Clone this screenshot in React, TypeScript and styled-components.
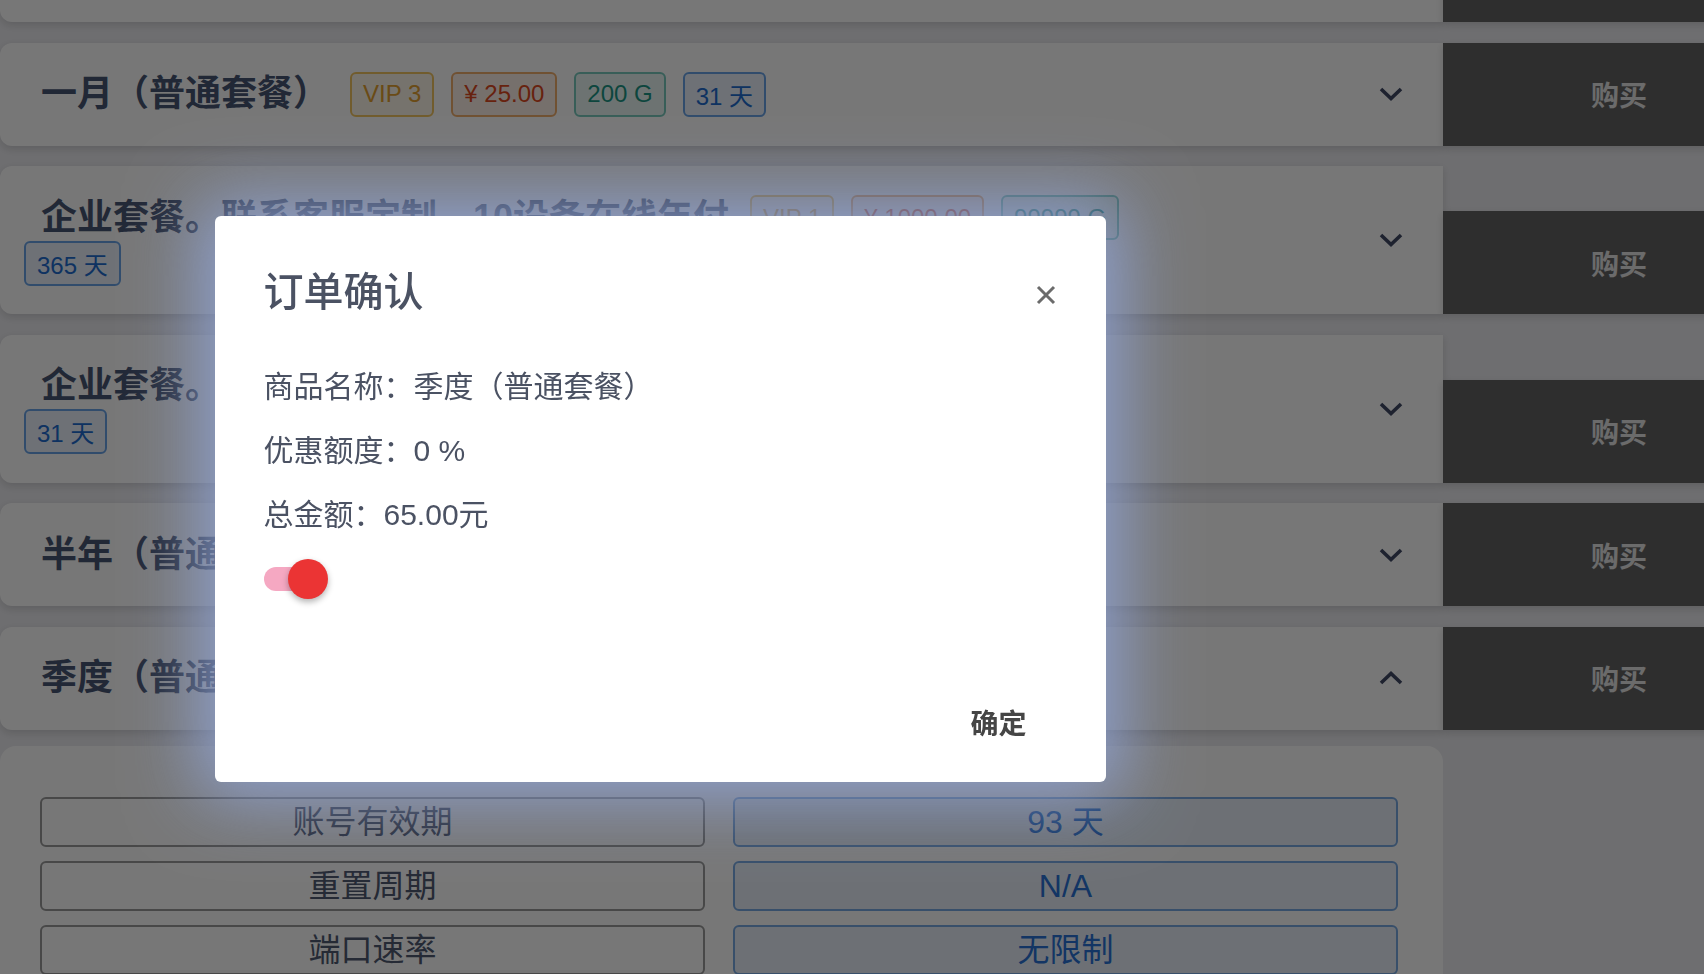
import React from 'react';
import styled, { createGlobalStyle, css } from 'styled-components';

const GlobalStyle = createGlobalStyle`
    html, body {
        margin: 0;
        padding: 0;
        overflow: hidden;
        background: #ececf0;
        font-family: "Liberation Sans", "Noto Sans CJK SC", sans-serif;
    }
`;

type TagKind = 'vip' | 'price' | 'traffic' | 'days';

const tagColors: Record<TagKind, { fg: string; border: string; bg: string }> = {
    vip: { fg: '#e3a030', border: '#f3c561', bg: '#fdf6ea' },
    price: { fg: '#dd4a22', border: '#f1ad6c', bg: '#fdf0e8' },
    traffic: { fg: '#1c9686', border: '#78c9bd', bg: '#eaf7f4' },
    days: { fg: '#206cd0', border: '#6aa4e8', bg: '#ebf3fd' },
};

const PlanList = styled.div`
    width: 1795px;
    margin-top: -81px;
    display: grid;
    grid-template-columns: 1443px 352px;
    row-gap: 20.5px;
    align-items: end;
`;

const PlanCard = styled.div`
    display: flex;
    align-items: center;
    background: #fff;
    border-radius: 12px 0 0 12px;
    box-shadow: 0 3px 8px rgba(0, 0, 0, 0.14);
    padding: 28.5px 40px 28.5px 24px;
`;

const Head = styled.div`
    flex: 1;
    display: flex;
    flex-wrap: wrap;
    align-items: center;
    margin-right: 185px;
`;

const Title = styled.span`
    font-size: 36px;
    font-weight: 700;
    line-height: 46px;
    color: #485674;
    margin: 0 21px 0 17px;
`;

const Tag = styled.span<{ $kind: TagKind }>`
    box-sizing: border-box;
    display: inline-flex;
    align-items: center;
    height: 45px;
    padding: 0 11px;
    margin-right: 17px;
    border: 2px solid;
    border-radius: 6px;
    font-size: 24px;
    ${({ $kind }) => css`
        color: ${tagColors[$kind].fg};
        border-color: ${tagColors[$kind].border};
        background: ${tagColors[$kind].bg};
    `}
`;

const Chevron = styled.svg<{ $up?: boolean }>`
    width: 24px;
    height: 14px;
    flex: none;
    transform: ${({ $up }) => ($up ? 'rotate(180deg)' : 'none')};
`;

const BuyButton = styled.button`
    width: 352px;
    height: 103px;
    border: none;
    background: #646464;
    color: #e6e6e6;
    font-family: inherit;
    font-size: 28px;
    font-weight: 700;
    box-shadow: 0 3px 8px rgba(0, 0, 0, 0.14);
`;

const Details = styled.div`
    grid-column: 1;
    display: grid;
    grid-template-columns: 1fr 1fr;
    column-gap: 28px;
    row-gap: 14px;
    background: #fff;
    border-radius: 16px 16px 0 0;
    padding: 51px 45px 40px 40px;
    margin-top: -4px;
`;

const Cell = styled.div<{ $value?: boolean }>`
    box-sizing: border-box;
    height: 50px;
    border: 2px solid ${({ $value }) => ($value ? '#78a9e3' : '#9a9a9a')};
    border-radius: 6px;
    background: ${({ $value }) => ($value ? '#e9f1fb' : '#fff')};
    color: ${({ $value }) => ($value ? '#2a73d6' : '#4f5a72')};
    font-size: 32px;
    line-height: 46px;
    text-align: center;
`;

const Scrim = styled.div`
    position: fixed;
    inset: 0;
    z-index: 10;
    background: rgba(0, 0, 0, 0.535);
    display: flex;
    align-items: center;
    justify-content: center;
    padding: 24px 384px 0 0;
`;

const Dialog = styled.div`
    width: 891px;
    height: 566px;
    display: flex;
    flex-direction: column;
    background: #fff;
    border-radius: 6px;
    box-shadow: 0 0 70px 16px rgba(145, 165, 215, 0.9);
    color: #4b5263;
`;

const DialogHead = styled.div`
    display: flex;
    align-items: center;
    justify-content: space-between;
    padding: 50px 50px 0 49px;
`;

const DialogTitle = styled.h2`
    margin: 0;
    font-size: 40px;
    font-weight: 500;
    line-height: 52px;
`;

const CloseButton = styled.button`
    display: flex;
    padding: 0;
    margin-top: 6px;
    border: none;
    background: none;
`;

const DialogBody = styled.div`
    padding: 49px 0 0 49px;
`;

const InfoRow = styled.p`
    margin: 0 0 24px;
    font-size: 30px;
    line-height: 40px;
`;

const Switch = styled.div`
    position: relative;
    width: 56px;
    height: 24px;
    margin-top: 32px;
    border-radius: 12px;
    background: #f5a8c2;
`;

const Knob = styled.span`
    position: absolute;
    left: 24px;
    top: -8px;
    width: 40px;
    height: 40px;
    border-radius: 50%;
    background: #eb3434;
    box-shadow: 0 3px 6px rgba(0, 0, 0, 0.3);
`;

const DialogFoot = styled.div`
    margin-top: auto;
    display: flex;
    justify-content: flex-end;
    padding: 0 59px 30px 0;
`;

const ConfirmButton = styled.button`
    height: 60px;
    padding: 0 20px;
    border: none;
    background: none;
    font-family: inherit;
    font-size: 28px;
    font-weight: 700;
    color: #454545;
`;

type Plan = {
    name: string;
    tags: [TagKind, string][];
    open?: boolean;
};

const plans: Plan[] = [
    { name: '年付（普通套餐）', tags: [['vip', 'VIP 3'], ['price', '¥ 240.00'], ['traffic', '2400 G'], ['days', '365 天']] },
    { name: '一月（普通套餐）', tags: [['vip', 'VIP 3'], ['price', '¥ 25.00'], ['traffic', '200 G'], ['days', '31 天']] },
    { name: '企业套餐。联系客服定制，10设备在线年付', tags: [['vip', 'VIP 1'], ['price', '¥ 1000.00'], ['traffic', '99999 G'], ['days', '365 天']] },
    { name: '企业套餐。联系客服定制，10设备在线月付', tags: [['vip', 'VIP 1'], ['price', '¥ 100.00'], ['traffic', '99999 G'], ['days', '31 天']] },
    { name: '半年（普通套餐）', tags: [['vip', 'VIP 3'], ['price', '¥ 130.00'], ['traffic', '1200 G'], ['days', '186 天']] },
    { name: '季度（普通套餐）', tags: [['vip', 'VIP 3'], ['price', '¥ 65.00'], ['traffic', '600 G'], ['days', '93 天']], open: true },
];

const details: [string, string][] = [
    ['账号有效期', '93 天'],
    ['重置周期', 'N/A'],
    ['端口速率', '无限制'],
    ['可用流量', '600 G'],
];

function ChevronIcon({ up }: { up?: boolean }) {
    return (
        <Chevron $up={up} viewBox="0 0 24 14">
            <path d="M2 2 L12 11.5 L22 2" fill="none" stroke="#404a66" strokeWidth="3.6" />
        </Chevron>
    );
}

export default function App() {
    return (
        <>
            <GlobalStyle />
            <PlanList>
                {plans.map((plan) => (
                    <React.Fragment key={plan.name}>
                        <PlanCard>
                            <Head>
                                <Title>{plan.name}</Title>
                                {plan.tags.map(([kind, text]) => (
                                    <Tag key={kind} $kind={kind}>{text}</Tag>
                                ))}
                            </Head>
                            <ChevronIcon up={plan.open} />
                        </PlanCard>
                        <BuyButton>购买</BuyButton>
                        {plan.open && (
                            <Details>
                                {details.map(([label, value]) => (
                                    <React.Fragment key={label}>
                                        <Cell>{label}</Cell>
                                        <Cell $value>{value}</Cell>
                                    </React.Fragment>
                                ))}
                            </Details>
                        )}
                    </React.Fragment>
                ))}
            </PlanList>
            <Scrim>
                <Dialog>
                    <DialogHead>
                        <DialogTitle>订单确认</DialogTitle>
                        <CloseButton aria-label="close">
                            <svg width="20" height="20" viewBox="0 0 20 20">
                                <path d="M2 2 L18 18 M18 2 L2 18" stroke="#6b6b6b" strokeWidth="3" />
                            </svg>
                        </CloseButton>
                    </DialogHead>
                    <DialogBody>
                        <InfoRow>商品名称：季度（普通套餐）</InfoRow>
                        <InfoRow>优惠额度：0 %</InfoRow>
                        <InfoRow>总金额：65.00元</InfoRow>
                        <Switch>
                            <Knob />
                        </Switch>
                    </DialogBody>
                    <DialogFoot>
                        <ConfirmButton>确定</ConfirmButton>
                    </DialogFoot>
                </Dialog>
            </Scrim>
        </>
    );
}
